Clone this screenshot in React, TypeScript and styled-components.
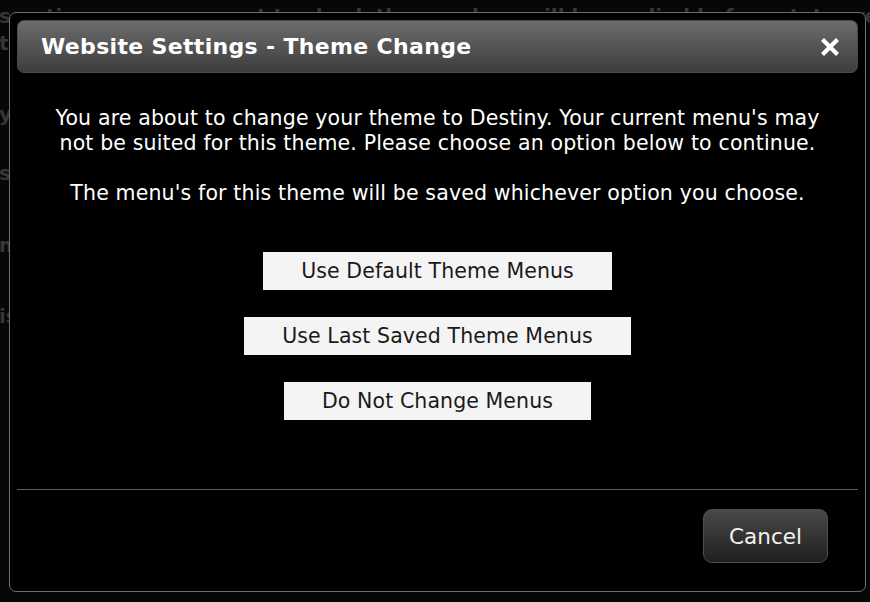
import React from "react";
import styled, { createGlobalStyle } from "styled-components";

const GlobalStyle = createGlobalStyle`
  html, body {
    margin: 0;
    padding: 0;
    background: #070707;
    font-family: "DejaVu Sans", Verdana, sans-serif;
  }
`;

const Backdrop = styled.div`
  position: relative;
  width: 870px;
  height: 602px;
  overflow: hidden;
  background: #070707;
`;

const PageText = styled.div`
  padding-top: 3px;
  margin-left: -1px;
  color: #363636;
  font-size: 20px;
  font-weight: bold;
  line-height: 27px;
  white-space: nowrap;
`;

const PageLine = styled.div<{ gap?: number }>`
  margin-top: ${(p) => p.gap ?? 0}px;
`;

const Dialog = styled.div`
  position: absolute;
  left: 9px;
  top: 12px;
  width: 857px;
  height: 580px;
  border: 1px solid #6e6e6e;
  border-radius: 7px;
  background: #000;
  display: flex;
  flex-direction: column;
  padding: 7px 7px 0 7px;
  box-sizing: border-box;
`;

const TitleBar = styled.div`
  height: 53px;
  box-sizing: border-box;
  border: 1px solid #4a4a4a;
  border-radius: 7px;
  background: linear-gradient(#6c6c6c, #3d3d3d);
  display: flex;
  align-items: center;
  justify-content: space-between;
  padding: 0 18px 0 23px;
`;

const Title = styled.span`
  color: #fff;
  font-weight: bold;
  font-size: 22px;
  letter-spacing: 0.33px;
`;

const CloseButton = styled.button`
  border: none;
  background: none;
  padding: 0;
  width: 18px;
  height: 18px;
  cursor: pointer;
  display: flex;
`;

const Body = styled.div`
  flex: 1;
  display: flex;
  flex-direction: column;
  align-items: center;
  padding-top: 33px;
`;

const Message = styled.p<{ gap?: number }>`
  margin: 0 0 ${(p) => p.gap ?? 0}px;
  color: #fff;
  font-size: 20.5px;
  line-height: 25px;
  text-align: center;
  letter-spacing: 0.15px;
`;

const Choices = styled.div`
  display: flex;
  flex-direction: column;
  align-items: center;
  gap: 27px;
  margin-top: 46px;
`;

const ChoiceButton = styled.button`
  height: 38px;
  padding: 0 38px;
  border: none;
  background: #f4f4f4;
  color: #1a1a1a;
  font-family: "DejaVu Sans", Verdana, sans-serif;
  font-size: 20.5px;
  letter-spacing: 0.1px;
  cursor: pointer;
`;

const Footer = styled.div`
  border-top: 1px solid #5e5e5e;
  height: 102px;
  display: flex;
  justify-content: flex-end;
  align-items: flex-start;
  padding: 19px 30px 0 0;
  box-sizing: border-box;
`;

const CancelButton = styled.button`
  width: 125px;
  height: 54px;
  border: 1px solid #4e4e4e;
  border-radius: 9px;
  background: linear-gradient(#494949, #1f1f1f);
  color: #f2f2f2;
  font-family: "DejaVu Sans", Verdana, sans-serif;
  font-size: 21.5px;
  cursor: pointer;
`;

const CloseIcon = () => (
  <svg width="18" height="18" viewBox="0 0 18 18">
    <path d="M3 3 L15 15 M15 3 L3 15" stroke="#fff" strokeWidth="4.2" strokeLinecap="square" />
  </svg>
);

const choices = ["Use Default Theme Menus", "Use Last Saved Theme Menus", "Do Not Change Menus"];

export default function App() {
  return (
    <>
      <GlobalStyle />
      <Backdrop>
        <PageText>
          <PageLine>s options you may want to check these values will be applied before stats are made for</PageLine>
          <PageLine>t</PageLine>
          <PageLine gap={44}>y</PageLine>
          <PageLine gap={32}>s</PageLine>
          <PageLine gap={45}>m</PageLine>
          <PageLine gap={44}>is</PageLine>
        </PageText>
        <Dialog>
          <TitleBar>
            <Title>Website Settings - Theme Change</Title>
            <CloseButton aria-label="Close">
              <CloseIcon />
            </CloseButton>
          </TitleBar>
          <Body>
            <Message gap={25}>
              You are about to change your theme to Destiny. Your current menu's may
              <br />
              not be suited for this theme. Please choose an option below to continue.
            </Message>
            <Message>The menu's for this theme will be saved whichever option you choose.</Message>
            <Choices>
              {choices.map((c) => (
                <ChoiceButton key={c}>{c}</ChoiceButton>
              ))}
            </Choices>
          </Body>
          <Footer>
            <CancelButton>Cancel</CancelButton>
          </Footer>
        </Dialog>
      </Backdrop>
    </>
  );
}
